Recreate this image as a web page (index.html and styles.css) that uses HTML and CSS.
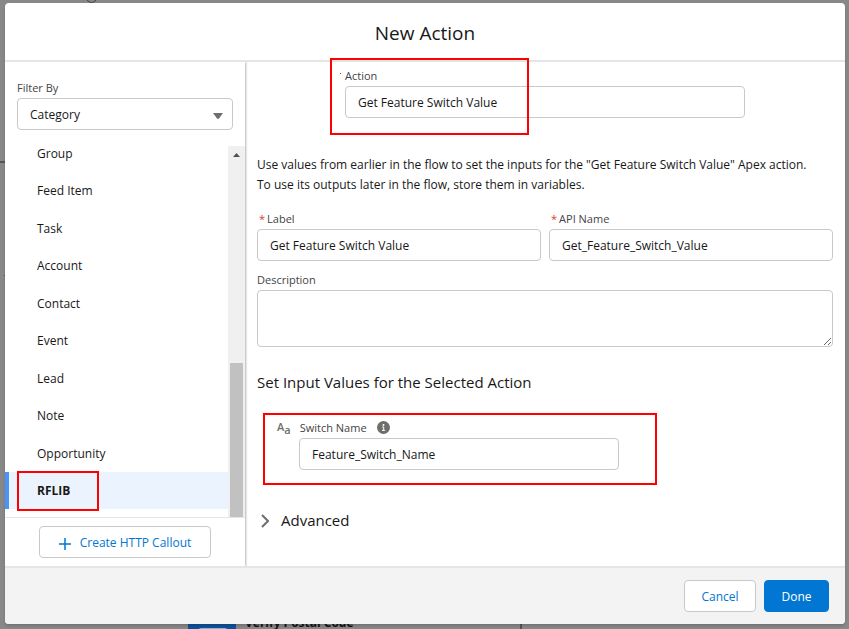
FILE: index.html
```html
<!DOCTYPE html>
<html lang="en">
<head>
<meta charset="utf-8">
<meta name="viewport" content="width=device-width, initial-scale=1">
<title>New Action</title>
<link rel="stylesheet" href="styles.css">
</head>
<body>
<div class="canvas" aria-hidden="true">
  <span class="node-ring"></span>
  <span class="connector connector-left"></span>
  <span class="connector connector-mark"></span>
  <span class="node-icon"></span>
  <span class="node-title">Verify Postal Code</span>
  <span class="connector connector-down"></span>
</div>

<section class="modal" role="dialog" aria-labelledby="modal-title">
  <header class="modal-header">
    <h1 id="modal-title">New Action</h1>
  </header>

  <div class="modal-body">
    <aside class="sidebar">
      <div class="filter">
        <label class="label" for="filter">Filter By</label>
        <div class="select-wrap">
          <select class="control" id="filter"><option>Category</option></select>
          <svg class="caret" viewBox="0 0 10 6" width="10" height="6"><path d="M0 0h10L6 5.500Q5 6.300 4 5.500z" fill="#706e6b"/></svg>
        </div>
      </div>
      <nav class="list-area" aria-label="Categories">
        <ul class="category-list">
          <li><a href="#">Group</a></li>
          <li><a href="#">Feed Item</a></li>
          <li><a href="#">Task</a></li>
          <li><a href="#">Account</a></li>
          <li><a href="#">Contact</a></li>
          <li><a href="#">Event</a></li>
          <li><a href="#">Lead</a></li>
          <li><a href="#">Note</a></li>
          <li><a href="#">Opportunity</a></li>
          <li class="selected"><a href="#" aria-current="true">RFLIB</a><span class="mark mark-category"></span></li>
        </ul>
        <div class="scrollbar">
          <svg viewBox="0 0 17 17" width="17" height="17"><path d="M5 11h7L8.500 7z" fill="#505050"/></svg>
          <span class="thumb"></span>
        </div>
      </nav>
      <div class="sidebar-footer">
        <button class="button callout" type="button">
          <svg viewBox="0 0 12 14" width="12" height="14"><path d="M6 2v12M0 8h12" stroke="#0176d3" stroke-width="1.500"/></svg>
          Create HTTP Callout
        </button>
      </div>
    </aside>

    <main class="content">
      <div class="field action-field">
        <label class="label" for="action">Action</label>
        <input class="control" id="action" type="text" value="Get Feature Switch Value">
        <span class="required-dot"></span>
        <span class="mark mark-action"></span>
      </div>

      <p class="intro">Use values from earlier in the flow to set the inputs for the "Get Feature Switch Value" Apex action.<br>To use its outputs later in the flow, store them in variables.</p>

      <div class="pair">
        <div class="field">
          <label class="label required" for="label"><abbr>*</abbr>Label</label>
          <input class="control" id="label" type="text" value="Get Feature Switch Value">
        </div>
        <div class="field">
          <label class="label required" for="api"><abbr>*</abbr>API Name</label>
          <input class="control" id="api" type="text" value="Get_Feature_Switch_Value">
        </div>
      </div>

      <div class="field description">
        <label class="label" for="description">Description</label>
        <textarea class="control" id="description"></textarea>
      </div>

      <h2>Set Input Values for the Selected Action</h2>

      <div class="field switch-field">
        <div class="switch-label">
          <span class="text-type" aria-hidden="true"><b>A</b><b class="small">a</b></span>
          <label class="label" for="switch">Switch Name</label>
          <svg class="info" viewBox="0 0 13 13" width="13" height="13"><circle cx="6.500" cy="6.500" r="6.500" fill="#706e6b"/><circle cx="6.500" cy="3.900" r="1" fill="#fff"/><path d="M5.200 6h1.500v3.300M5 9.400h3.200" fill="none" stroke="#fff"/></svg>
        </div>
        <input class="control" id="switch" type="text" value="Feature_Switch_Name">
        <span class="mark mark-switch"></span>
      </div>

      <button class="advanced" type="button">
        <svg viewBox="0 0 8 16" width="8" height="16"><path d="M1 3l6 6-6 6" fill="none" stroke="#706e6b" stroke-width="2"/></svg>
        Advanced
      </button>
    </main>
  </div>

  <footer class="modal-footer">
    <button class="button cancel" type="button">Cancel</button>
    <button class="button primary" type="button">Done</button>
  </footer>
</section>
</body>
</html>
```
FILE: styles.css
```css
* { box-sizing: border-box; }

body {
  margin: 0;
  min-height: 100vh;
  padding: 3px 4px 5px 5px;
  display: flex;
  position: relative;
  overflow: hidden;
  background: #888;
  color: #181818;
  font: 12px/20px "Open Sans", "Noto Sans", sans-serif;
}

h1, h2, p, ul { margin: 0; padding: 0; font-weight: 400; }
button, input, select, textarea { font: inherit; color: inherit; }

/* Flow canvas behind the dialog */
.canvas { position: absolute; inset: 0; overflow: hidden; }
.canvas span { position: absolute; }
.node-ring { left: 86px; top: -8px; width: 11px; height: 11px; border: 1px solid #444; border-radius: 50%; }
.connector { background: #555; }
.connector-left { left: 0; top: 161px; width: 5px; height: 2px; }
.connector-mark { left: 4px; top: 275px; width: 1px; height: 1px; }
.connector-down { left: 520px; bottom: 0; width: 2px; height: 12px; }
.node-icon { left: 188px; bottom: -40px; width: 48px; height: 48px; background: #0f529a; }
.node-icon::after { content: ""; position: absolute; left: 10px; top: 7px; width: 28px; height: 20px; border: 1px solid #8fb0d4; border-radius: 3px; }
.node-title { left: 245px; bottom: -4px; color: #151515; font-weight: 700; white-space: nowrap; }

.modal {
  position: relative;
  flex: 1;
  min-width: 0;
  display: flex;
  flex-direction: column;
  overflow: hidden;
  border-radius: 4px;
  background: #fff;
  box-shadow: 0 2px 3px rgba(0, 0, 0, .16);
}
.modal-header { padding: 16px 16px 13px; border-bottom: 2px solid #e5e5e5; text-align: center; }
.modal-header h1 { font-size: 19px; line-height: 28px; }
.modal-body { flex: 1; display: flex; }
.modal-footer {
  display: flex;
  justify-content: flex-end;
  gap: 8px;
  padding: 12px 16px;
  border-top: 2px solid #e5e5e5;
  background: #f3f3f3;
}

.label { display: block; margin-bottom: 2px; color: #444; font-size: 11px; line-height: 16px; }
.control {
  display: block;
  width: 100%;
  height: 32px;
  padding: 0 12px;
  border: 1px solid #c9c9c9;
  border-radius: 4px;
  background: #fff;
}

.button {
  height: 32px;
  min-width: 65px;
  padding: 2px 16px 0;
  border: 1px solid #c9c9c9;
  border-radius: 4px;
  background: #fff;
  color: #0176d3;
}
.cancel { min-width: 72px; }
.primary { border-color: #0176d3; background: #0176d3; color: #fff; }

.sidebar {
  flex: 0 0 240px;
  display: flex;
  flex-direction: column;
  box-shadow: 1px 0 2px rgba(0, 0, 0, .3);
  clip-path: inset(0 -4px 0 0);
}
.filter { padding: 18px 12px 16px; }
.select-wrap { position: relative; }
.select-wrap select { appearance: none; padding-top: 2px; }
.caret { position: absolute; right: 10px; top: 15px; pointer-events: none; }

.list-area { flex: 1 0 371px; height: 371px; display: flex; overflow: hidden; }
.category-list {
  flex: 1;
  align-self: flex-end;
  display: grid;
  grid-template-rows: repeat(10, 1fr);
  height: 375px;
  margin-bottom: 8px;
  list-style: none;
  line-height: 16px;
}
.category-list li { position: relative; display: flex; align-items: center; padding: 2px 0 0 32px; }
.category-list a { color: inherit; text-decoration: none; }
.category-list .selected { background: #ebf4fe; box-shadow: inset 4px 0 #4894fb; font-weight: 700; }
.scrollbar { width: 17px; display: flex; flex-direction: column; align-items: center; background: #f0f0f0; }
.thumb { width: 13px; height: 154px; margin-top: auto; background: #c1c1c1; }
.sidebar-footer { padding: 8px 34px; border-top: 1px solid #e5e5e5; }
.callout { width: 100%; display: flex; align-items: center; justify-content: center; gap: 9px; padding: 2px 0 0; }

.content { flex: 1; min-width: 0; padding: 6px 12px 32px; }
.field { position: relative; }
.action-field { max-width: 400px; margin: 0 auto 37px; }
.required-dot { position: absolute; left: -5px; top: 5px; width: 1px; height: 1px; background: #c23934; }
.pair { display: grid; grid-template-columns: 1fr 1fr; gap: 8px; margin: 16px 0 11px; }
.required { padding-left: 2px; }
.required abbr { margin-right: 2px; color: #d83a3a; }
.description textarea { height: 57px; resize: vertical; }
h2 { margin: 23px 0 26px; font-size: 15px; line-height: 24px; }

.switch-field { max-width: 362px; padding-left: 42px; margin-bottom: 38px; }
.switch-label { display: flex; gap: 9px; margin-left: -22px; }
.text-type { flex: 0 0 13px; display: flex; color: #706e6b; font-size: 11px; line-height: 14px; }
.text-type b { font-weight: 600; }
.text-type .small { padding-top: 3px; }
.info { margin: 1px 0 0 1px; }

.advanced {
  display: flex;
  align-items: center;
  gap: 12px;
  padding: 0 4px;
  border: 0;
  background: none;
  font-size: 15px;
  line-height: 24px;
}

/* Callout boxes over the highlighted controls */
.mark { position: absolute; border: 2px solid #f00; pointer-events: none; }
.mark-action { left: -15px; top: -10px; width: 199px; height: 77px; }
.mark-category { left: 12px; top: -1px; width: 82px; height: 40px; }
.mark-switch { left: 6px; top: -7px; width: 394px; height: 72px; }
```
